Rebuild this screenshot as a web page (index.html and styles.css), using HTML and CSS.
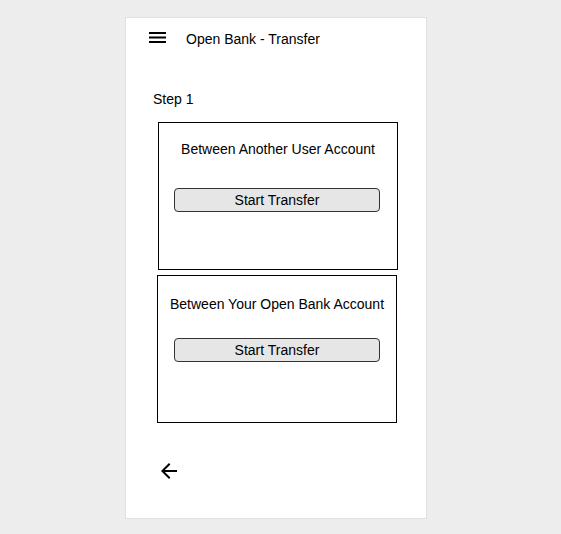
FILE: index.html
```html
<!DOCTYPE html>
<html lang="en">
<head>
  <meta charset="UTF-8" />
  <meta name="viewport" content="width=device-width, initial-scale=1.0" />
  <title>Open Bank - Transfer</title>
  <link rel="stylesheet" href="styles.css">
</head>
<body>
  <!-- Phone frame -->
  <div class="phone">
    <!-- Top bar -->
    <header class="phone__bar">
      <svg class="phone__menu" width="18" height="12" viewBox="0 0 18 12" aria-hidden="true">
        <rect x="0" y="0" width="17" height="2" fill="#000" />
        <rect x="0" y="4.5" width="17" height="2" fill="#000" />
        <rect x="0" y="9" width="17" height="2" fill="#000" />
      </svg>
      <span class="phone__title">Open Bank - Transfer</span>
    </header>

    <!-- Step content -->
    <main class="transfer">
      <div class="transfer__step">Step 1</div>

      <div class="transfer-box transfer-box--user">
        <div class="transfer-box__title">Between Another User Account</div>
        <button class="transfer-box__button">Start Transfer</button>
      </div>

      <div class="transfer-box transfer-box--own">
        <div class="transfer-box__title">Between Your Open Bank Account</div>
        <button class="transfer-box__button">Start Transfer</button>
      </div>

      <!-- Back -->
      <svg class="transfer__back" width="24" height="24" viewBox="0 0 24 24" aria-hidden="true">
        <path d="M20 11H7.83l5.59-5.59L12 4l-8 8 8 8 1.41-1.41L7.83 13H20v-2z" fill="#000" />
      </svg>
    </main>
  </div>
</body>
</html>
```

FILE: styles.css
```css
/* Page */
body {
  margin: 0;
  padding: 17px 0 0 125px;
  background: #ededed;
  font-family: 'Liberation Sans', Arial, sans-serif;
  font-size: 14px;
  color: #000;
}
/* Phone frame */
.phone {
  width: 302px;
  height: 502px;
  background: #fff;
  border: 1px solid #e0e0e0;
  box-sizing: border-box;
}
.phone__bar {
  display: flex;
  align-items: center;
  height: 38px;
  padding: 2px 0 0 23px;
}
.phone__menu {
  display: block;
  margin-top: -3px;
}
.phone__title {
  margin-left: 19px;
  line-height: 16px;
}
/* Transfer step */
.transfer {
  display: flex;
  flex-direction: column;
  align-items: flex-start;
}
.transfer__step {
  margin: 33px 0 0 27px;
  line-height: 16px;
}
/* Option boxes */
.transfer-box {
  display: flex;
  flex-direction: column;
  align-items: center;
  width: 240px;
  height: 148px;
  box-sizing: border-box;
  border: 1px solid #000;
}
.transfer-box--user {
  margin: 15px 0 0 32px;
  padding-top: 18px;
}
.transfer-box--own {
  margin: 5px 0 0 31px;
  padding-top: 20px;
}
.transfer-box__title {
  line-height: 16px;
  white-space: nowrap;
}
.transfer-box__button {
  width: 206px;
  height: 24px;
  padding: 0;
  font-family: inherit;
  font-size: 14px;
  color: #000;
  background: #e6e6e6;
  border: 1px solid #333;
  border-radius: 4px;
}
.transfer-box--user .transfer-box__button {
  margin: 31px 2px 0 0;
}
.transfer-box--own .transfer-box__button {
  margin-top: 26px;
}
.transfer__back {
  display: block;
  margin: 36px 0 0 31px;
}
```
